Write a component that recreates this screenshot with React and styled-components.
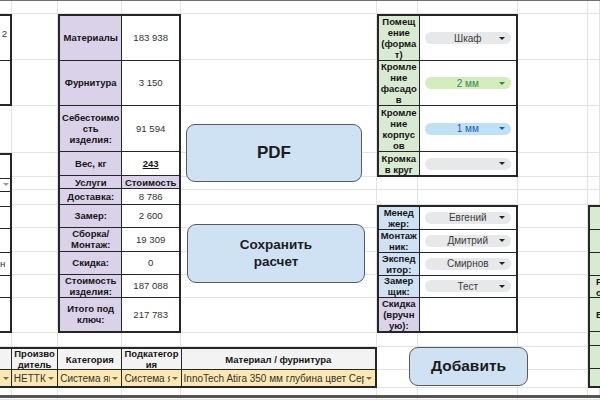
import React from "react";
import styled, { createGlobalStyle } from "styled-components";

// sheet geometry (px), taken from the screenshot grid lines
const COLS = [12, 46, 64, 59, 196, 41, 100, 70, 12];
const ROWS = [13, 46, 46, 47, 24, 13, 15, 23, 24, 23, 23, 35, 14, 23, 18, 12];

const px = (a) => a.map((n) => `${n}px`).join(" ");
const fr = (a) => a.map((n) => `minmax(0, ${n}fr)`).join(" ");

const PURPLE = "#d9d2e9";
const GREEN = "#d9ead3";
const BLUE = "#cfe2f3";
const YELLOW = "#fce8b2";
const LINE = "#262626";

const GlobalStyle = createGlobalStyle`
  html, body { margin: 0; padding: 0; background: #fff; }
  body { font-family: "Liberation Sans", Arial, sans-serif; }
  * { box-sizing: border-box; }
`;

const Sheet = styled.div`
  width: 600px;
  height: 400px;
  overflow: hidden;
  display: grid;
  grid-template-columns: ${px(COLS)};
  grid-template-rows: ${px(ROWS)};
  border-top: 1px solid #707070;
`;

const Backdrop = styled.div`
  grid-column: 1 / -1;
  grid-row: 1 / -1;
  display: grid;
  grid-template-columns: ${px(COLS)};
  grid-template-rows: ${px(ROWS)};
`;

const GridCell = styled.div`
  border-right: 1px solid #e3e3e3;
  border-bottom: 1px solid #e3e3e3;
`;

const BottomRule = styled.div`
  grid-column: 1 / -1;
  grid-row: 16;
  align-self: end;
  height: 3px;
  margin-bottom: 2px;
  background: #555;
  z-index: 2;
`;

const Table = styled.div`
  grid-column: ${(p) => p.$col};
  grid-row: ${(p) => p.$row};
  margin: ${(p) => p.$margin || "0"};
  display: grid;
  grid-template-columns: ${(p) => fr(p.$cols)};
  grid-template-rows: ${(p) => fr(p.$rows)};
  gap: 1px;
  background: ${LINE};
  border: 2px solid ${LINE};
  z-index: 1;
`;

const Cell = styled.div`
  min-width: 0;
  min-height: 0;
  background: ${(p) => p.$bg || "#fff"};
  display: flex;
  align-items: center;
  justify-content: ${(p) => p.$justify || "center"};
  padding: ${(p) => p.$pad || "0 1px"};
  text-align: center;
  white-space: nowrap;
  overflow: hidden;
  font-size: 9.6px;
  line-height: 11px;
  color: #333;
`;

const Label = styled(Cell)`
  font-weight: 700;
  font-size: 9.5px;
  color: #151515;
`;

const Strong = styled.span`
  font-weight: 700;
  color: #151515;
  text-decoration: underline;
`;

const Caret = styled.span`
  flex: none;
  width: 0;
  height: 0;
  border-left: 3px solid transparent;
  border-right: 3px solid transparent;
  border-top: 3.5px solid ${(p) => p.$color || "#333"};
`;

const Chip = styled.div`
  width: 86px;
  height: 12px;
  border-radius: 6px;
  background: ${(p) => p.$bg};
  color: ${(p) => p.$fg};
  display: flex;
  align-items: center;
  padding: 0 6px 0 12px;
  font-size: 10px;
`;

const ChipText = styled.span`
  flex: 1;
  text-align: center;
`;

const Drop = styled(Cell)`
  background: ${YELLOW};
  justify-content: space-between;
  gap: 2px;
  padding: 0 3px 0 2px;
  font-size: 10px;
`;

const DropText = styled.span`
  flex: 1;
  min-width: 0;
  overflow: hidden;
  text-align: left;
  color: #333;
`;

const Button = styled.button`
  grid-column: ${(p) => p.$col};
  grid-row: ${(p) => p.$row};
  justify-self: start;
  align-self: start;
  margin: ${(p) => p.$margin};
  width: ${(p) => p.$w}px;
  height: ${(p) => p.$h}px;
  background: ${BLUE};
  border: 1.5px solid #5a5a5a;
  border-radius: 9px;
  font-family: inherit;
  font-weight: 700;
  font-size: ${(p) => p.$size}px;
  line-height: ${(p) => p.$size + 3}px;
  color: #1c1c1c;
  padding: 0;
  z-index: 2;
`;

const Lines = ({ text }) =>
  Array.isArray(text)
    ? text.map((t, i) => (
        <React.Fragment key={i}>
          {i > 0 && <br />}
          {t}
        </React.Fragment>
      ))
    : text;

const COST_ROWS = [
  { label: "Материалы", value: "183 938" },
  { label: "Фурнитура", value: "3 150" },
  { label: ["Себестоимо", "сть", "изделия:"], value: "91 594" },
  { label: "Вес, кг", value: <Strong>243</Strong> },
  { label: "Услуги", value: "Стоимость", head: true },
  { label: "Доставка:", value: "8 786" },
  { label: "Замер:", value: "2 600" },
  { label: ["Сборка/", "Монтаж:"], value: "19 309" },
  { label: "Скидка:", value: "0" },
  { label: ["Стоимость", "изделия:"], value: "187 088" },
  { label: ["Итого под", "ключ:"], value: "217 783" },
];

const CHIP_GRAY = { bg: "#e7e8ea", fg: "#3c3c3c", caret: "#222" };
const CHIP_GREEN = { bg: "#d4edbc", fg: "#2f8a4c", caret: "#2f8a4c" };
const CHIP_BLUE = { bg: "#bfe1f6", fg: "#1b5fb0", caret: "#1b5fb0" };

const ORDER_ROWS = [
  { label: ["Помещ", "ение", "(форма", "т)"], chip: "Шкаф", tone: CHIP_GRAY },
  { label: ["Кромле", "ние", "фасадо", "в"], chip: "2 мм", tone: CHIP_GREEN },
  { label: ["Кромле", "ние", "корпус", "ов"], chip: "1 мм", tone: CHIP_BLUE },
  { label: ["Кромка", "в круг"], chip: "", tone: CHIP_GRAY },
];

const STAFF_ROWS = [
  { label: ["Менед", "жер:"], chip: "Евгений" },
  { label: ["Монтаж", "ник:"], chip: "Дмитрий" },
  { label: ["Экспед", "итор:"], chip: "Смирнов" },
  { label: ["Замер", "щик:"], chip: "Тест" },
];

const ITEM_HEAD = ["", ["Произво", "дитель"], "Категория", ["Подкатегор", "ия"], "Материал / фурнитура"];
const ITEM_ROW = ["", "НЕТТКЕ", "Система ящиков", "Система ящиков", "InnoTech Atira 350 мм глубина цвет Серебро"];

const ChipBox = ({ text, tone }) => (
  <Chip $bg={tone.bg} $fg={tone.fg}>
    <ChipText>{text}</ChipText>
    <Caret $color={tone.caret} />
  </Chip>
);

export default function App() {
  return (
    <>
      <GlobalStyle />
      <Sheet>
        <Backdrop>
          {ROWS.flatMap((_, r) => COLS.map((__, c) => <GridCell key={`${r}-${c}`} />))}
        </Backdrop>

        {/* clipped boxes on the left edge */}
        <Table $col="1 / 2" $row="2 / 4" $cols={[1]} $rows={[46, 46]} $margin="0 0 0 -3px">
          <Cell $justify="flex-end" $pad="0 3px 9px 0">2</Cell>
          <Cell />
        </Table>

        <Table $col="1 / 2" $row="5 / 13" $cols={[1]} $rows={[24, 13, 15, 23, 24, 23, 23, 35]} $margin="0 0 0 -3px">
          <Cell />
          <Cell $justify="flex-start" $pad="0 0 0 4px">
            <Caret $color="#999" />
          </Cell>
          <Cell />
          <Cell />
          <Cell />
          <Cell $justify="flex-start" $pad="0 0 0 1px">н</Cell>
          <Cell />
          <Cell />
        </Table>

        {/* cost summary */}
        <Table $col="3 / 5" $row="2 / 13" $cols={[64, 59]} $rows={[46, 46, 47, 24, 13, 15, 23, 24, 23, 23, 35]}>
          {COST_ROWS.map((row, i) => (
            <React.Fragment key={i}>
              <Label $bg={PURPLE}>
                <span>
                  <Lines text={row.label} />
                </span>
              </Label>
              {row.head ? <Label $bg={PURPLE}>{row.value}</Label> : <Cell>{row.value}</Cell>}
            </React.Fragment>
          ))}
        </Table>

        <Button $col="5 / 6" $row="4 / 7" $margin="18px 0 0 5px" $w={176} $h={58} $size={17}>
          PDF
        </Button>
        <Button $col="5 / 6" $row="8 / 11" $margin="19px 0 0 6px" $w={178} $h={59} $size={13.5}>
          Сохранить
          <br />
          расчет
        </Button>

        {/* order options */}
        <Table $col="6 / 8" $row="2 / 6" $cols={[41, 100]} $rows={[46, 46, 47, 24]}>
          {ORDER_ROWS.map((row, i) => (
            <React.Fragment key={i}>
              <Label $bg={GREEN}>
                <span>
                  <Lines text={row.label} />
                </span>
              </Label>
              <Cell>
                <ChipBox text={row.chip} tone={row.tone} />
              </Cell>
            </React.Fragment>
          ))}
        </Table>

        {/* staff */}
        <Table $col="6 / 8" $row="8 / 13" $cols={[41, 100]} $rows={[23, 24, 23, 23, 35]}>
          {STAFF_ROWS.map((row, i) => (
            <React.Fragment key={i}>
              <Label $bg={BLUE}>
                <span>
                  <Lines text={row.label} />
                </span>
              </Label>
              <Cell>
                <ChipBox text={row.chip} tone={CHIP_GRAY} />
              </Cell>
            </React.Fragment>
          ))}
          <Label $bg={PURPLE}>
            <span>
              <Lines text={["Скидка", "(вручн", "ую):"]} />
            </span>
          </Label>
          <Cell />
        </Table>

        {/* clipped table on the right edge */}
        <Table $col="9 / 10" $row="8 / 16" $cols={[1]} $rows={[23, 24, 23, 23, 35, 14, 23, 18]} $margin="0 -8px 0 0">
          <Cell $bg={GREEN} />
          <Cell $bg={GREEN} />
          <Cell $bg={GREEN} />
          <Label $bg={GREEN} $justify="flex-start" $pad="0 0 0 6px">
            <span style={{ textAlign: "left" }}>
              Р<br />о
            </span>
          </Label>
          <Label $bg={GREEN} $justify="flex-start" $pad="0 0 0 6px">
            В
          </Label>
          <Cell $bg={GREEN} />
          <Cell $bg={GREEN} />
          <Cell $bg={GREEN} />
        </Table>

        {/* items list */}
        <Table $col="1 / 6" $row="14 / 16" $cols={[12, 46, 64, 59, 196]} $rows={[23, 18]} $margin="0 0 0 -3px">
          {ITEM_HEAD.map((h, i) => (
            <Label key={`h${i}`} $bg="#f3f3f3">
              <span>
                <Lines text={h} />
              </span>
            </Label>
          ))}
          {ITEM_ROW.map((t, i) => (
            <Drop key={`d${i}`}>
              <DropText>{t}</DropText>
              <Caret $color="#7a6a45" />
            </Drop>
          ))}
        </Table>

        <Button $col="6 / 9" $row="14 / 16" $margin="0 0 0 32px" $w={119} $h={39} $size={15.5}>
          Добавить
        </Button>

        <BottomRule />
      </Sheet>
    </>
  );
}
